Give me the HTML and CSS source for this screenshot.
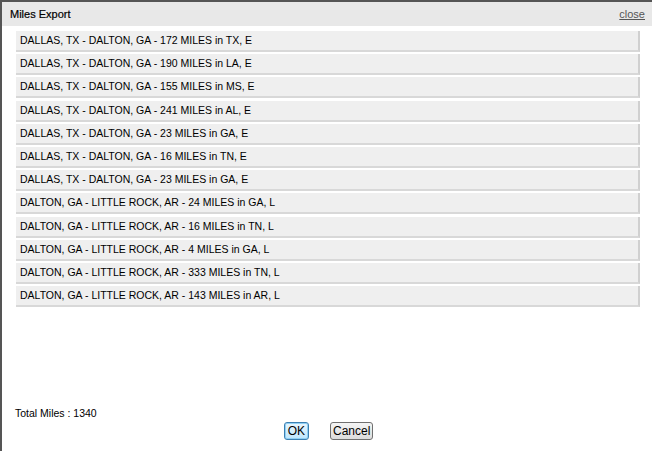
FILE: index.html
```html
<!DOCTYPE html>
<html lang="en">
<head>
  <meta charset="UTF-8">
  <title>Miles Export</title>
  <link rel="stylesheet" href="styles.css">
</head>
<body>
  <div class="dialog">
    <div class="dialog-header">
      <span class="title">Miles Export</span>
      <a href="#" class="close-link">close</a>
    </div>

    <div class="miles-list">
      <div class="miles-row">DALLAS, TX - DALTON, GA - 172 MILES in TX, E</div>
      <div class="miles-row">DALLAS, TX - DALTON, GA - 190 MILES in LA, E</div>
      <div class="miles-row">DALLAS, TX - DALTON, GA - 155 MILES in MS, E</div>
      <div class="miles-row">DALLAS, TX - DALTON, GA - 241 MILES in AL, E</div>
      <div class="miles-row">DALLAS, TX - DALTON, GA - 23 MILES in GA, E</div>
      <div class="miles-row">DALLAS, TX - DALTON, GA - 16 MILES in TN, E</div>
      <div class="miles-row">DALLAS, TX - DALTON, GA - 23 MILES in GA, E</div>
      <div class="miles-row">DALTON, GA - LITTLE ROCK, AR - 24 MILES in GA, L</div>
      <div class="miles-row">DALTON, GA - LITTLE ROCK, AR - 16 MILES in TN, L</div>
      <div class="miles-row">DALTON, GA - LITTLE ROCK, AR - 4 MILES in GA, L</div>
      <div class="miles-row">DALTON, GA - LITTLE ROCK, AR - 333 MILES in TN, L</div>
      <div class="miles-row">DALTON, GA - LITTLE ROCK, AR - 143 MILES in AR, L</div>
    </div>

    <div class="dialog-footer">
      <div class="total">Total Miles : 1340</div>
      <div class="buttons">
        <button class="btn btn-ok">OK</button>
        <button class="btn">Cancel</button>
      </div>
    </div>
  </div>
</body>
</html>
```

FILE: styles.css
```css
body {
  margin: 0;
  font-family: "Liberation Sans", Arial, sans-serif;
  background-color: #fff;
}

.dialog {
  height: 451px;
  box-sizing: border-box;
  border-top: 2px solid #555;
  border-left: 2px solid #555;
  display: flex;
  flex-direction: column;
}

.dialog-header {
  height: 24px;
  background-color: #e8e8e8;
  display: flex;
  align-items: center;
  justify-content: space-between;
  padding: 0 7px 0 8px;
  font-size: 11px;
}

.title {
  color: #000;
  -webkit-text-stroke: 0.2px #000;
}

.close-link {
  color: #555;
  font-size: 11px;
}

.miles-list {
  padding: 5px 12px 0 14px;
  flex: 1;
}

.miles-row {
  background-color: #efefef;
  border-right: 2px solid #d0d0d0;
  border-bottom: 2px solid #d8d8d8;
  height: 19px;
  line-height: 19px;
  padding-left: 4px;
  margin-bottom: 2.2px;
  font-size: 10.5px;
  color: #000;
}

.dialog-footer {
  padding: 0 0 11px 13px;
  font-size: 10.5px;
}

.total {
  margin-bottom: 3px;
}

.buttons {
  display: flex;
  justify-content: center;
  gap: 21px;
  padding-right: 10px;
}

.btn {
  font-family: "Liberation Sans", Arial, sans-serif;
  font-size: 12px;
  padding: 0 2px;
  height: 18px;
  background: linear-gradient(#f4f4f4, #dcdcdc);
  border: 1px solid #707070;
  border-radius: 3px;
  color: #000;
}

.btn-ok {
  padding: 0 3px;
  background: linear-gradient(#eaf6fd, #bee6fd);
  border-color: #3c7fb1;
  box-shadow: inset 0 0 0 1px #8fd0f5;
}
```
